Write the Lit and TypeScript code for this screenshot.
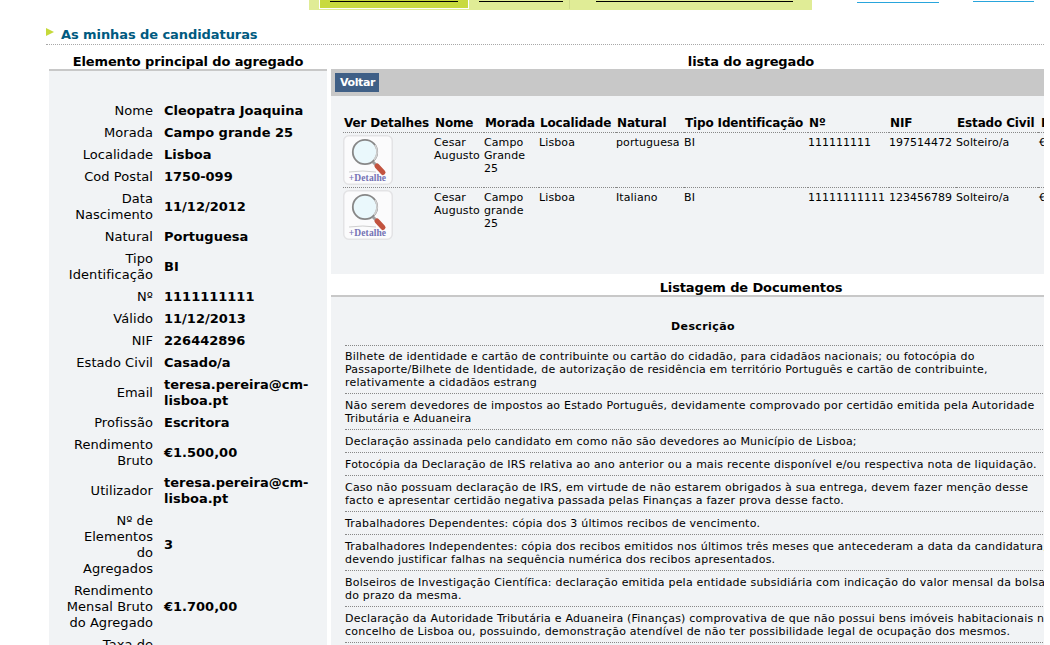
import { LitElement, html, css, svg } from "lit";
import { customElement } from "lit/decorators.js";

const person: [string, string[]][] = [
  ["Nome", ["Cleopatra Joaquina"]],
  ["Morada", ["Campo grande 25"]],
  ["Localidade", ["Lisboa"]],
  ["Cod Postal", ["1750-099"]],
  ["Data\nNascimento", ["11/12/2012"]],
  ["Natural", ["Portuguesa"]],
  ["Tipo\nIdentificação", ["BI"]],
  ["Nº", ["1111111111"]],
  ["Válido", ["11/12/2013"]],
  ["NIF", ["226442896"]],
  ["Estado Civil", ["Casado/a"]],
  ["Email", ["teresa.pereira@cm-", "lisboa.pt"]],
  ["Profissão", ["Escritora"]],
  ["Rendimento\nBruto", ["€1.500,00"]],
  ["Utilizador", ["teresa.pereira@cm-", "lisboa.pt"]],
  ["Nº de\nElementos\ndo\nAgregados", ["3"]],
  ["Rendimento\nMensal Bruto\ndo Agregado", ["€1.700,00"]],
  ["Taxa de\nEsforço", ["30%"]],
];

const members = [
  { nome: ["Cesar", "Augusto"], morada: ["Campo", "Grande", "25"], loc: "Lisboa", nat: "portuguesa", n: "111111111", nif: "197514472" },
  { nome: ["Cesar", "Augusto"], morada: ["Campo", "grande", "25"], loc: "Lisboa", nat: "Italiano", n: "11111111111", nif: "123456789" },
];

const docs: string[][] = [
  ["Bilhete de identidade e cartão de contribuinte ou cartão do cidadão, para cidadãos nacionais; ou fotocópia do", "Passaporte/Bilhete de Identidade, de autorização de residência em território Português e cartão de contribuinte,", "relativamente a cidadãos estrang"],
  ["Não serem devedores de impostos ao Estado Português, devidamente comprovado por certidão emitida pela Autoridade", "Tributária e Aduaneira"],
  ["Declaração assinada pelo candidato em como não são devedores ao Município de Lisboa;"],
  ["Fotocópia da Declaração de IRS relativa ao ano anterior ou a mais recente disponível e/ou respectiva nota de liquidação."],
  ["Caso não possuam declaração de IRS, em virtude de não estarem obrigados à sua entrega, devem fazer menção desse", "facto e apresentar certidão negativa passada pelas Finanças a fazer prova desse facto."],
  ["Trabalhadores Dependentes: cópia dos 3 últimos recibos de vencimento."],
  ["Trabalhadores Independentes: cópia dos recibos emitidos nos últimos três meses que antecederam a data da candidatura,", "devendo justificar falhas na sequência numérica dos recibos apresentados."],
  ["Bolseiros de Investigação Científica: declaração emitida pela entidade subsidiária com indicação do valor mensal da bolsa", "do prazo da mesma."],
  ["Declaração da Autoridade Tributária e Aduaneira (Finanças) comprovativa de que não possui bens imóveis habitacionais no", "concelho de Lisboa ou, possuindo, demonstração atendível de não ter possibilidade legal de ocupação dos mesmos."],
];

const lens = svg`<svg class="ico" viewBox="0 0 50 50" width="50" height="50" aria-hidden="true">
  <rect x="0.75" y="0.75" width="48.5" height="48.5" rx="5" fill="#fbfbfc" stroke="#e3e3e5" stroke-width="1.5"/>
  <path d="M6 37 Q20 35 33 37" stroke="#cfcfcf" fill="none"/>
  <path d="M30 27 L34 31" stroke="#a0a0a0" stroke-width="3"/>
  <path d="M34 31 L40 37.5" stroke="#c2533f" stroke-width="5" stroke-linecap="round"/>
  <circle cx="22" cy="17" r="12.2" fill="#eaf8fc" stroke="#878787" stroke-width="1.8"/>
  <path d="M31 25 A12.2 12.2 0 0 0 32 10" stroke="#cfcfcf" stroke-width="1.8" fill="none"/>
  <text x="24.5" y="46" text-anchor="middle" class="ico-t">+Detalhe</text>
</svg>`;

@customElement("app-root")
export class AppRoot extends LitElement {
  static styles = css`
    :host { display: block; width: 1050px; height: 645px; overflow: hidden; background: #fff; font-family: "DejaVu Sans", Verdana, sans-serif; font-size: 11px; color: #000; }
    .page { width: 1044px; height: 645px; overflow: hidden; }
    .top { display: flex; height: 10px; overflow: hidden; padding-left: 309px; }
    .tabs { display: flex; flex: none; width: 503px; height: 10px; background: #e0ec96; padding-left: 10px; box-sizing: border-box; }
    .tab { height: 9px; box-sizing: border-box; flex: none; }
    .tab.on { width: 150px; background: #c8da3e; border: 1px solid #fff; border-top: 0; padding-left: 10px; }
    .tab.two { width: 100px; padding-left: 10px; }
    .tab.sep { width: 222px; padding-left: 26px; border-left: 1px solid #cfd98a; }
    .bar { display: block; height: 1px; background: #000; margin-top: 1px; }
    .tab.on .bar { width: 128px; } .tab.two .bar { width: 84px; } .tab.sep .bar { width: 197px; }
    .lnk { height: 1px; background: #29a5dc; flex: none; }
    .l1 { width: 82px; margin-left: 45px; margin-top: 2px; } .l2 { width: 61px; margin-left: 34px; margin-top: 1px; }
    .main { padding-left: 46px; }
    .title { display: flex; align-items: flex-start; height: 35px; box-sizing: border-box; padding-top: 17px; border-bottom: 1px dotted #a8a8a8; }
    .tri { width: 0; height: 0; border-left: 8px solid #c5d93a; border-top: 4px solid transparent; border-bottom: 4px solid transparent; margin-top: 1px; margin-right: 7px; }
    .title b { font-size: 13px; color: #005a80; line-height: 16px; letter-spacing: -0.08px; }
    .cols { display: flex; gap: 4px; padding-left: 3px; }
    .left { width: 278px; flex: none; }
    .right { width: 840px; flex: none; }
    h2 { margin: 0; font-size: 13px; font-weight: bold; text-align: center; line-height: 16px; padding-top: 9px; height: 24px; box-sizing: border-box; letter-spacing: -0.13px; }
    .person { border-top: 2px solid #c8c8c8; background: #f1f3f5; padding-top: 29px; height: 620px; box-sizing: border-box; display: grid; grid-template-columns: 104px 1fr; column-gap: 11px; align-content: start; font-size: 13px; line-height: 16px; }
    .k { text-align: right; padding: 3px 0; align-self: center; white-space: pre-line; letter-spacing: 0.06px; }
    .v { font-weight: bold; padding: 3px 0; align-self: center; }
    .gray { background: #c8c8c8; height: 27px; box-sizing: border-box; padding: 4px; }
    .btn { display: block; width: 44px; box-sizing: border-box; background: #3f5f86; color: #fff; font-weight: bold; font-size: 11px; line-height: 19px; padding: 0 5px; height: 19px; letter-spacing: -0.4px; }
    .members { background: #f1f3f5; height: 178px; box-sizing: border-box; padding: 20px 0 0 12px; }
    table { border-collapse: collapse; }
    .mt { table-layout: fixed; width: 695px; }
    .mt th { font-size: 12px; text-align: left; line-height: 15px; padding: 0 0 1px 1px; border-bottom: 1px dotted #888; white-space: nowrap; letter-spacing: -0.15px; }
    .mt th:last-child { padding-left: 3px; }
    .mt td { vertical-align: top; line-height: 13px; padding: 3px 0 0 0; border-bottom: 1px dotted #888; white-space: nowrap; height: 51px; box-sizing: content-box; letter-spacing: 0.1px; }
    .mt td.num { letter-spacing: 0; }
    .mt td:last-child { padding-left: 1px; }
    .mt tr:last-child td { border-bottom: 0; }
    .mt td.i { padding: 2px 0 0 0; }
    .ico { display: block; }
    .ico-t { font: bold 9.5px "Liberation Serif", serif; fill: #7472b4; }
    h2.docs { padding-top: 6px; border-bottom: 2px solid #c8c8c8; height: 23px; }
    .dp { background: #f1f3f5; padding: 23px 0 0 14px; height: 400px; box-sizing: border-box; letter-spacing: 0.21px; }
    .dh { width: 716px; text-align: center; font-weight: bold; line-height: 13px; padding-bottom: 12px; border-bottom: 1px dotted #888; letter-spacing: 0.4px; }
    .dr { width: 716px; line-height: 13px; padding: 5px 0 4px; border-bottom: 1px dotted #888; white-space: nowrap; }
    .dr:nth-child(2) { padding: 4px 0 4px; }
  `;

  render() {
    return html`
      <div class="page">
        <div class="top">
          <div class="tabs">
            <div class="tab on"><span class="bar"></span></div>
            <div class="tab two"><span class="bar"></span></div>
            <div class="tab sep"><span class="bar"></span></div>
          </div>
          <div class="lnk l1"></div><div class="lnk l2"></div>
        </div>
        <div class="main">
          <div class="title"><span class="tri"></span><b>As minhas de candidaturas</b></div>
          <div class="cols">
            <section class="left">
              <h2>Elemento principal do agregado</h2>
              <div class="person">
                ${person.map(([k, v]) => html`<div class="k">${k}</div><div class="v">${v.map((l, i) => html`${i ? html`<br />` : ""}${l}`)}</div>`)}
              </div>
            </section>
            <section class="right">
              <h2>lista do agregado</h2>
              <div class="gray"><span class="btn">Voltar</span></div>
              <div class="members">
                <table class="mt">
                  <colgroup>
                    <col style="width:91px" /><col style="width:50px" /><col style="width:55px" /><col style="width:77px" /><col style="width:68px" /><col style="width:124px" /><col style="width:81px" /><col style="width:67px" /><col style="width:82px" /><col style="width:80px" />
                  </colgroup>
                  <thead><tr><th>Ver Detalhes</th><th>Nome</th><th>Morada</th><th>Localidade</th><th>Natural</th><th>Tipo Identificação</th><th>Nº</th><th>NIF</th><th>Estado Civil</th><th>Rendimento</th></tr></thead>
                  <tbody>
                    ${members.map((m) => html`<tr>
                      <td class="i">${lens}</td>
                      <td>${m.nome[0]}<br />${m.nome[1]}</td>
                      <td>${m.morada[0]}<br />${m.morada[1]}<br />${m.morada[2]}</td>
                      <td>${m.loc}</td><td>${m.nat}</td><td>BI</td><td class="num">${m.n}</td><td class="num">${m.nif}</td><td>Solteiro/a</td><td>€1.200,00</td>
                    </tr>`)}
                  </tbody>
                </table>
              </div>
              <h2 class="docs">Listagem de Documentos</h2>
              <div class="dp">
                <div class="dh">Descrição</div>
                ${docs.map((d) => html`<div class="dr">${d.map((l, i) => html`${i ? html`<br />` : ""}${l}`)}</div>`)}
              </div>
            </section>
          </div>
        </div>
      </div>
    `;
  }
}
